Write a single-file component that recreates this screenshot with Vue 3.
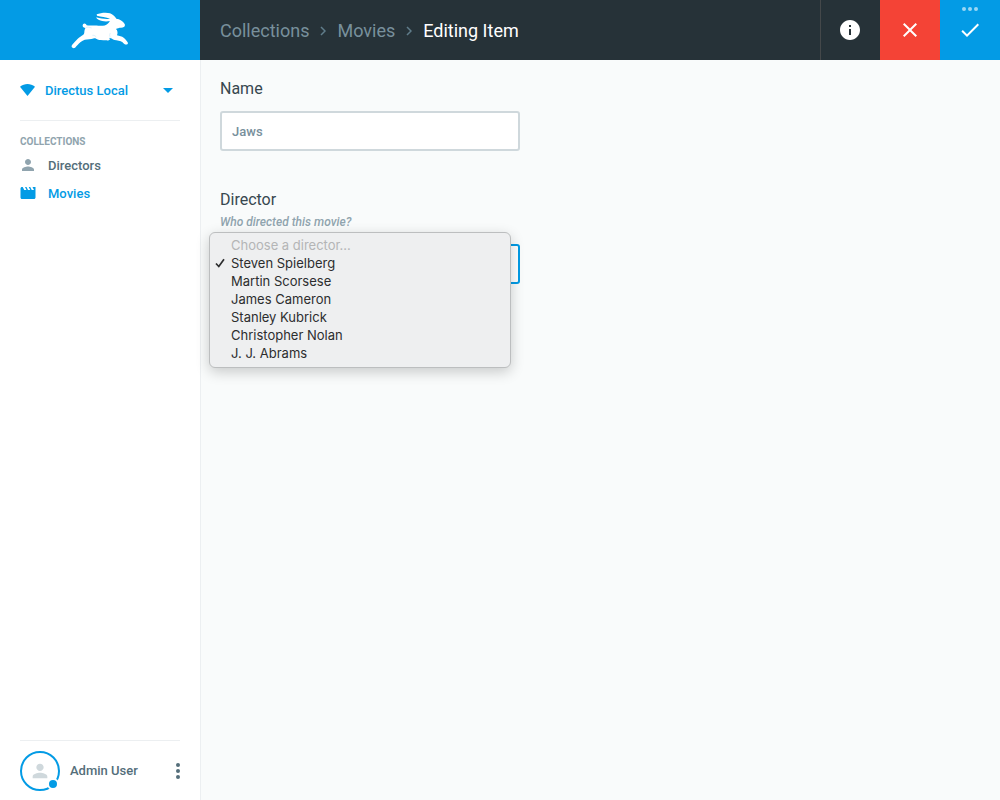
<template>
    <div class="app">
        <aside class="sidebar">
            <a href="#" class="logo" aria-label="Home">
                <svg viewBox="0 0 240 150" width="80" height="50" fill="#fff">
                    <path d="M110 28 C122 23 140 22 150 25 C158 28 165 35 169 41 C179 42 189 48 194 57 C197 64 191 68 184 68 C177 68 172 70 168 72 C173 77 174 84 171 91 C178 94 186 94 191 98 C197 103 202 109 204 114 C203 120 197 120 192 116 C187 110 179 107 169 106 C161 105 157 102 153 100 L146 98 C154 103 148 107 139 106 C131 106 124 104 119 105 C113 105 109 102 106 100 C103 99 100 101 94 102 C86 104 76 102 68 107 C59 112 54 118 49 124 C45 131 38 131 35 126 C33 121 40 116 44 111 C50 104 55 98 61 95 C69 91 73 88 73 82 C73 76 75 72 76 69 C69 69 66 63 69 58 C73 53 78 56 80 61 C90 63 103 60 115 62 C127 63 137 62 143 56 C147 53 148 50 150 48 C139 51 125 49 117 45 C112 43 109 40 109 37 C123 41 139 43 150 41 C139 35 122 36 111 32 Z" />
                    <path d="M76 69 C82 64 88 67 95 69 M109 96 C105 92 101 90 97 91 M153 98 C148 94 148 89 151 84" fill="none" stroke="#039be5" stroke-width="1" opacity="0.4" />
                </svg>
            </a>
            <div class="sidebar-content">
                <button class="project">
                    <svg viewBox="0 0 15 12" width="15" height="12" fill="currentColor">
                        <path d="M0 2.7 C4.5 -.9 10.500 -.9 15 2.700 L7.500 12 Z" />
                    </svg>
                    <span>Directus Local</span>
                    <svg class="project-arrow" viewBox="0 0 10 5" width="10" height="5" fill="currentColor">
                        <path d="M0 0 H10 L5 5 Z" />
                    </svg>
                </button>
                <nav>
                    <h3>Collections</h3>
                    <a v-for="item in collections" :key="item.name" href="#" class="nav-link" :class="{ active: item.active }">
                        <svg viewBox="0 0 24 24" width="18" height="18" fill="currentColor">
                            <path :d="item.icon" />
                        </svg>
                        {{ item.name }}
                    </a>
                </nav>
                <div class="user">
                    <span class="avatar">
                        <svg viewBox="0 0 24 24" width="22" height="22" fill="currentColor">
                            <path :d="personIcon" />
                        </svg>
                        <i class="status"></i>
                    </span>
                    <span class="user-name">Admin User</span>
                    <button class="user-menu" aria-label="User menu">
                        <svg viewBox="0 0 4 16" width="4" height="16" fill="currentColor">
                            <circle cx="2" cy="2" r="2" />
                            <circle cx="2" cy="8" r="2" />
                            <circle cx="2" cy="14" r="2" />
                        </svg>
                    </button>
                </div>
            </div>
        </aside>

        <div class="page">
            <header class="header">
                <nav class="breadcrumb">
                    <a href="#">Collections</a>
                    <svg viewBox="0 0 6 10" width="6" height="10"><path d="M1 1 L5 5 L1 9" /></svg>
                    <a href="#">Movies</a>
                    <svg viewBox="0 0 6 10" width="6" height="10"><path d="M1 1 L5 5 L1 9" /></svg>
                    <span>Editing Item</span>
                </nav>
                <button class="header-button info" aria-label="Info">
                    <svg viewBox="0 0 24 24" width="24" height="24" fill="currentColor">
                        <path d="M12 2C6.480 2 2 6.480 2 12s4.480 10 10 10 10-4.480 10-10S17.520 2 12 2zm1 15h-2v-6h2v6zm0-8h-2V7h2v2z" />
                    </svg>
                </button>
                <button class="header-button cancel" aria-label="Cancel">
                    <svg viewBox="0 0 24 24" width="24" height="24" fill="currentColor">
                        <path d="M19 6.410L17.590 5 12 10.590 6.410 5 5 6.410 10.590 12 5 17.590 6.410 19 12 13.410 17.590 19 19 17.590 13.410 12z" />
                    </svg>
                </button>
                <button class="header-button save" aria-label="Save">
                    <svg viewBox="0 0 24 24" width="24" height="24" fill="currentColor">
                        <path d="M9 16.170L4.830 12l-1.420 1.410L9 19 21 7l-1.410-1.410z" />
                    </svg>
                    <svg class="more" viewBox="0 0 16 4" width="16" height="4" fill="currentColor">
                        <circle cx="2" cy="2" r="2" />
                        <circle cx="8" cy="2" r="2" />
                        <circle cx="14" cy="2" r="2" />
                    </svg>
                </button>
            </header>

            <main class="form">
                <div class="field">
                    <label for="name">Name</label>
                    <input id="name" v-model="name" type="text" />
                </div>
                <div class="field">
                    <label for="director">Director</label>
                    <p class="note">Who directed this movie?</p>
                    <div class="select-box">
                        <select id="director" v-model="director">
                            <option v-for="option in directors" :key="option" :value="option">{{ option }}</option>
                        </select>
                        <ul v-if="open" class="menu">
                            <li>
                                <button disabled>Choose a director...</button>
                            </li>
                            <li v-for="option in directors" :key="option">
                                <button @click="choose(option)">
                                    <svg v-if="option === director" viewBox="0 0 10 10" width="10" height="10">
                                        <path d="M1 5.500 L3.800 8.500 L9 1.300" />
                                    </svg>
                                    {{ option }}
                                </button>
                            </li>
                        </ul>
                    </div>
                </div>
            </main>
        </div>
    </div>
</template>

<script setup>
import { ref } from 'vue';

const personIcon = 'M12 12c2.210 0 4-1.790 4-4s-1.790-4-4-4-4 1.790-4 4 1.790 4 4 4zm0 2c-2.670 0-8 1.340-8 4v2h16v-2c0-2.660-5.330-4-8-4z';
const movieIcon = 'M18 4l2 4h-3l-2-4h-2l2 4h-3l-2-4H8l2 4H7L5 4H4c-1.100 0-1.990.900-1.990 2L2 18c0 1.100.900 2 2 2h16c1.100 0 2-.900 2-2V4h-4z';

const collections = ref([
    { name: 'Directors', icon: personIcon, active: false },
    { name: 'Movies', icon: movieIcon, active: true }
]);

const directors = [
    'Steven Spielberg',
    'Martin Scorsese',
    'James Cameron',
    'Stanley Kubrick',
    'Christopher Nolan',
    'J. J. Abrams'
];

const name = ref('Jaws');
const director = ref('Steven Spielberg');
const open = ref(true);

const choose = (option) => {
    director.value = option;
    open.value = false;
};
</script>

<style>
body {
    background-color: #f9fbfb;
}
</style>

<style scoped>
.app {
    display: flex;
    min-height: 100vh;
    font-family: Roboto, sans-serif;
    font-size: 13px;
    color: #546e7a;
}

.app *,
.app {
    box-sizing: border-box;
}

button {
    padding: 0;
    border: none;
    background: none;
    font: inherit;
    color: inherit;
    cursor: pointer;
}

a {
    color: inherit;
    text-decoration: none;
}

svg {
    display: block;
    flex: none;
}

.sidebar {
    display: flex;
    flex-direction: column;
    flex: none;
    width: 200px;
    background-color: #fff;
}

.logo {
    display: flex;
    align-items: center;
    justify-content: center;
    height: 60px;
    background-color: #039be5;
}

.sidebar-content {
    display: flex;
    flex-direction: column;
    flex: 1;
    padding: 0 20px;
    font-weight: 500;
}

.project {
    display: flex;
    align-items: center;
    gap: 10px;
    height: 61px;
    padding-right: 7px;
    border-bottom: 1px solid #eceff1;
    color: #039be5;
}

.project-arrow {
    margin-left: auto;
}

h3 {
    margin: 15px 0 3px;
    font-size: 10px;
    font-weight: 700;
    line-height: 12px;
    text-transform: uppercase;
    color: #90a4ae;
}

.nav-link {
    display: flex;
    align-items: center;
    gap: 11px;
    height: 28px;
    margin-left: -1px;
}

.nav-link svg {
    color: #90a4ae;
}

.nav-link.active,
.nav-link.active svg {
    color: #039be5;
}

.user {
    display: flex;
    align-items: center;
    gap: 10px;
    height: 60px;
    margin-top: auto;
    border-top: 1px solid #eceff1;
}

.avatar {
    position: relative;
    display: flex;
    align-items: center;
    justify-content: center;
    width: 40px;
    height: 40px;
    border: 2px solid #039be5;
    border-radius: 50%;
    color: #cfd8dc;
}

.status {
    position: absolute;
    right: -1px;
    bottom: -1px;
    width: 12px;
    height: 12px;
    border: 2px solid #fff;
    border-radius: 50%;
    background-color: #039be5;
}

.user-menu {
    margin-left: auto;
}

.page {
    display: flex;
    flex-direction: column;
    flex: 1;
    min-width: 0;
}

.header {
    display: flex;
    height: 60px;
    background-color: #263238;
    color: #fff;
}

.breadcrumb {
    display: flex;
    align-items: center;
    gap: 11px;
    flex: 1;
    padding: 0 20px;
    font-size: 18px;
}

.breadcrumb a {
    color: #78909c;
}

.breadcrumb svg {
    margin-top: 2px;
    fill: none;
    stroke: #607d8b;
    stroke-width: 1.5;
}

.header-button {
    position: relative;
    display: flex;
    align-items: center;
    justify-content: center;
    width: 60px;
}

.info {
    box-shadow: inset 1px 0 #44484a;
}

.cancel {
    background-color: #f44336;
}

.save {
    background-color: #039be5;
}

.more {
    position: absolute;
    top: 7px;
    left: 22px;
    opacity: 0.6;
}

.form {
    display: flex;
    flex-direction: column;
    gap: 39px;
    flex: 1;
    padding: 19px;
    border-left: 1px solid #eceff1;
}

.field {
    width: 100%;
    max-width: 300px;
}

label {
    display: block;
    font-size: 16px;
    line-height: 20px;
    color: #37474f;
}

input,
select {
    display: block;
    width: 100%;
    height: 40px;
    padding: 0 10px;
    border: 2px solid #cfd8dc;
    border-radius: 3px;
    outline: none;
    background-color: #fff;
    font: 500 13px Roboto, sans-serif;
    color: #78909c;
}

input {
    margin-top: 12px;
}

select {
    appearance: none;
    border-color: #039be5;
}

.note {
    margin: 4px 0 14px;
    font-size: 12px;
    font-style: italic;
    font-weight: 500;
    line-height: 16px;
    color: #90a4ae;
}

.select-box {
    position: relative;
}

.menu {
    position: absolute;
    top: -12px;
    left: -11px;
    right: 9px;
    margin: 0;
    padding: 3px 0 5px;
    list-style: none;
    background-color: #eeeff0;
    border: 1px solid #bcbebf;
    border-radius: 6px;
    box-shadow: 0 4px 14px rgba(0, 0, 0, 0.2);
}

.menu button {
    position: relative;
    display: block;
    width: 100%;
    height: 18px;
    padding: 0 21px;
    font-family: Inter, sans-serif;
    font-size: 13px;
    line-height: 18px;
    text-align: left;
    color: #2c2d2e;
}

.menu button:disabled {
    color: #b4b5b6;
}

.menu svg {
    position: absolute;
    top: 4px;
    left: 5px;
    fill: none;
    stroke: #2c2d2e;
    stroke-width: 1.7;
}
</style>
